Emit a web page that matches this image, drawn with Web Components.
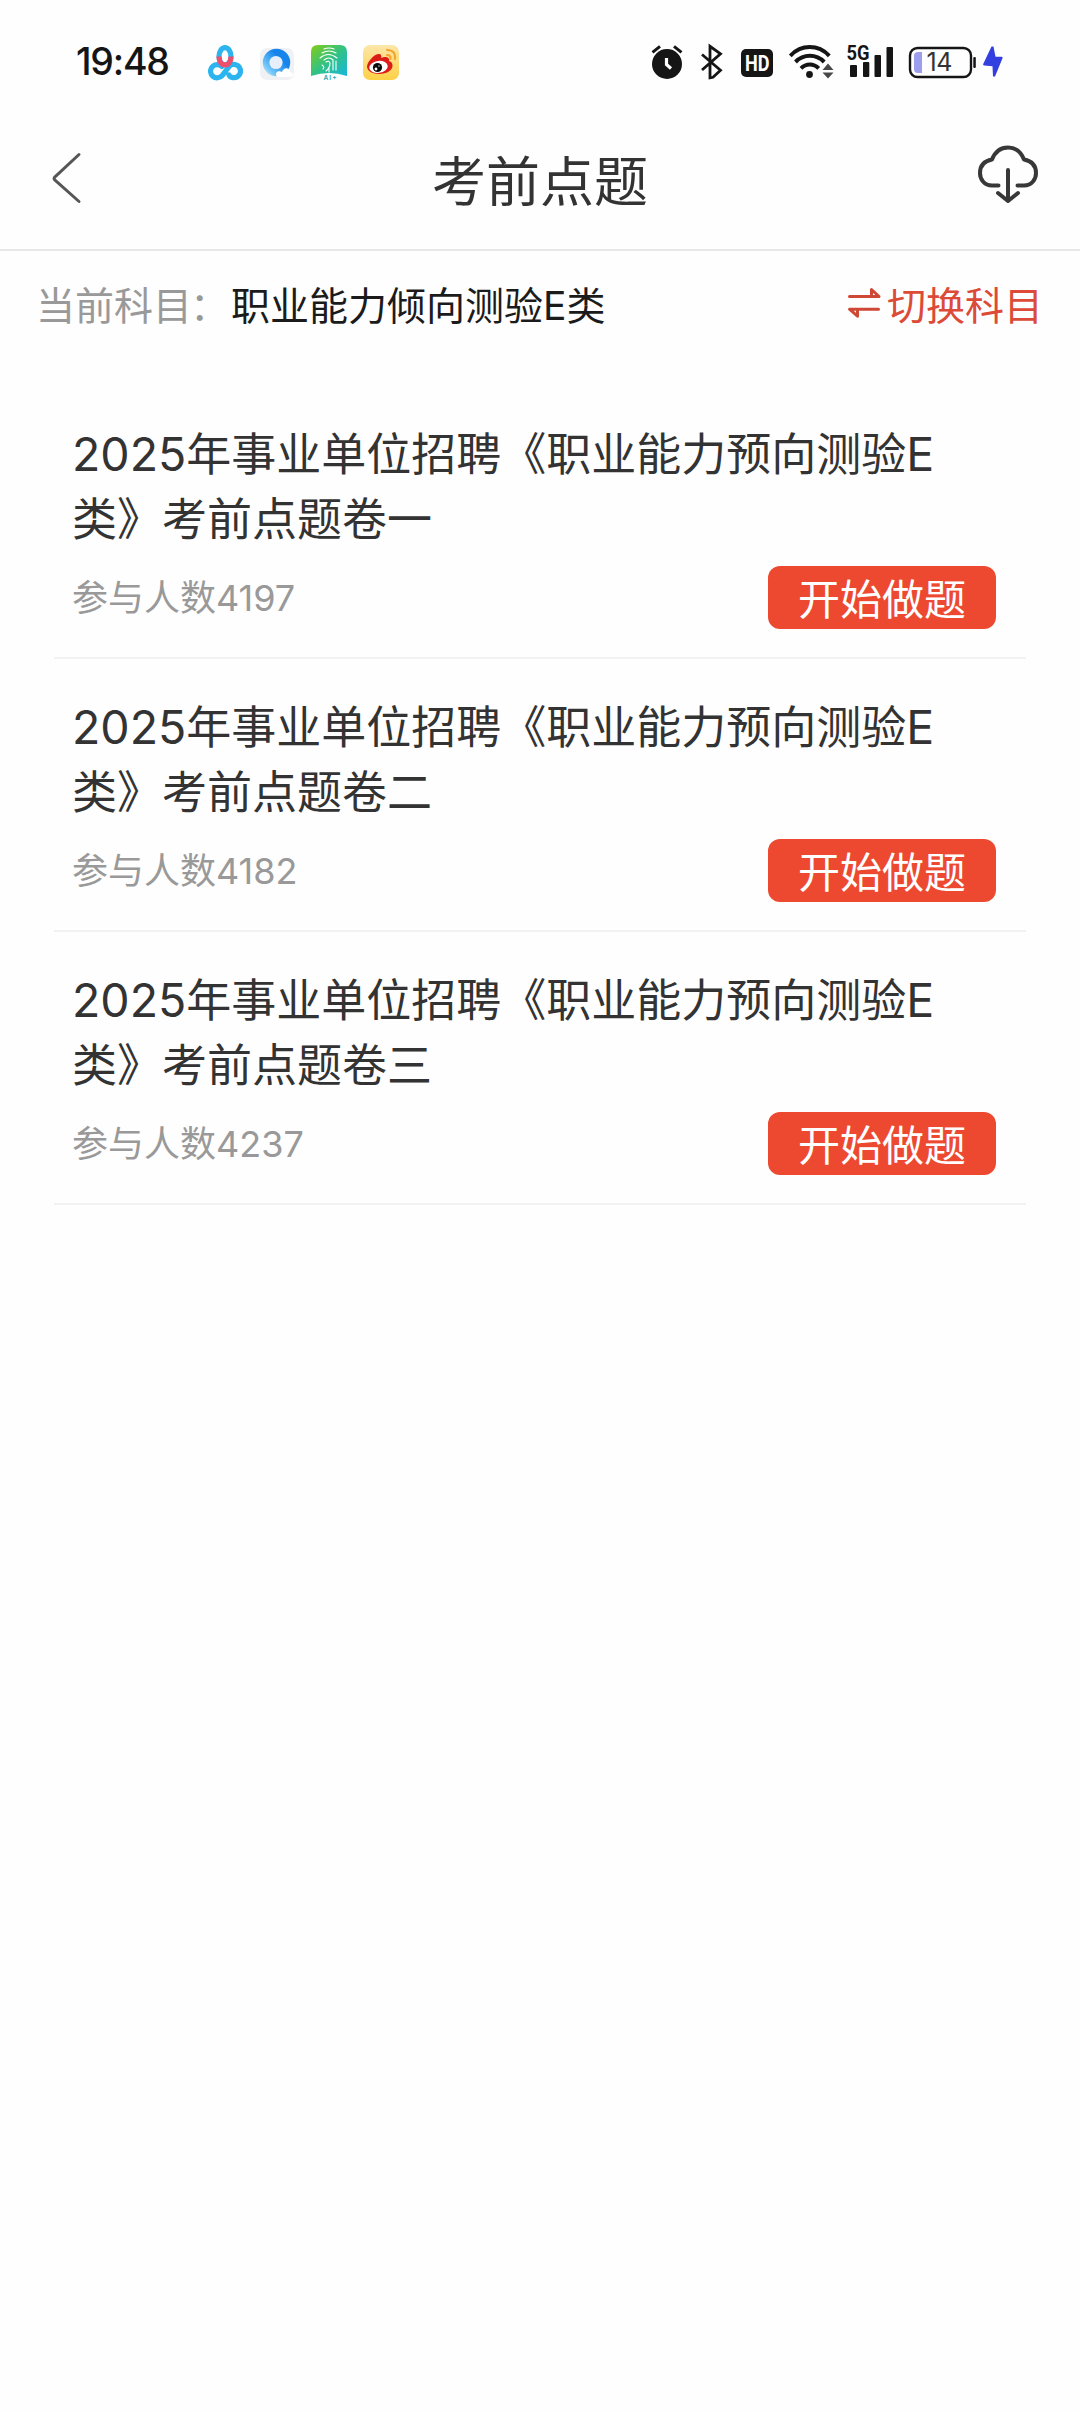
<!DOCTYPE html>
<html lang="zh-CN">
<head>
<meta charset="utf-8">
<title>考前点题</title>
<style>
html,body{margin:0;background:#fefefe}
body{font-family:Inter,"Noto Sans CJK SC",sans-serif;color:#333;min-height:2412px}
</style>
</head>
<body>
<exam-page></exam-page>
<script>
const define = (name, html) => customElements.define(name, class extends HTMLElement {
  constructor() {
    super();
    const t = document.createElement('template');
    t.innerHTML = html;
    this.attachShadow({mode: 'open'}).append(t.content.cloneNode(true));
  }
});

define('status-bar', `
<style>
:host{display:flex;align-items:center;height:124px;padding-left:76px;box-sizing:border-box;color:#151515}
svg{display:block;height:40px;flex:none}
time{font-size:37.5px;line-height:42px;font-weight:500;width:132px;letter-spacing:-1.2px;white-space:nowrap}
.apps{display:flex;gap:16px;width:443px}
.sys{display:flex}
</style>
<time>19:48</time>
<div class="apps">
<svg width="35" viewBox="208 42 35 40" fill="none" stroke-width="5.200" stroke-linecap="round">
  <path d="M222.300 75.300A6.600 6.600 0 1 1 221.800 66.500M222.300 75.300L228.800 66.800A6.600 6.600 0 1 1 233 77.600Q230 77.300 229 75" stroke="#2bb4ee"/>
  <ellipse cx="225" cy="56.300" rx="6" ry="8.600" stroke="#2bb4ee"/>
  <path d="M219 56.500c0 11.200 12 11.200 12 0" stroke="#ee4f6c" stroke-linecap="butt"/>
</svg>
<svg width="36" viewBox="259 42 36 40">
  <defs><linearGradient id="q" x1="1" y1="0" x2="0" y2="1"><stop offset=".35" stop-color="#1684ea"/><stop offset=".75" stop-color="#71c6f8"/><stop offset="1" stop-color="#e8f2fa"/></linearGradient></defs>
  <rect x="260" y="48" width="34" height="32" rx="7" fill="#f0f1f5"/>
  <circle cx="276.500" cy="62.500" r="13.700" fill="url(#q)"/>
  <circle cx="276" cy="62.500" r="6.600" fill="#e6effa"/>
  <path d="M277 77c-3-4 1-7 5-5 2-6 8-4 8 0 5 1 4 5 0 5z" fill="#fff"/>
</svg>
<svg width="36" viewBox="311 42 36 40">
  <defs><linearGradient id="a" x2="1" y2="1"><stop stop-color="#83cc16"/><stop offset=".5" stop-color="#32c284"/><stop offset="1" stop-color="#15b7dc"/></linearGradient></defs>
  <path d="M311 76V52q0-7 7-7h22q7 0 7 7v24q-18-6-36 0z" fill="url(#a)"/>
  <g fill="none" stroke="#fff" stroke-width="1.100" stroke-linecap="round"><path d="M324 49q5-2 10 0M322 53q7-4 14 0M320 58q8-7 17 0M324 60q5-4 9 0v10M326 62q3-2 4 1 0 5-4 8M322 65q3 2 1 4M329 67v5M336 61v9"/></g>
  <text x="323.500" y="79.600" font-size="6.500" font-weight="600" fill="#24a9b2" textLength="13">AI+</text>
</svg>
<svg width="36" viewBox="363 42 36 40">
  <defs><linearGradient id="w" y2="1" x2="0"><stop stop-color="#fce7ab"/><stop offset="1" stop-color="#fdd044"/></linearGradient></defs>
  <rect x="363" y="45" width="36" height="35" rx="7" fill="url(#w)"/>
  <path d="M367 67c0-5 7-13 12-13 2 0 3 2 2 4 4-2 9-1 8 3 4 1 4 5 3 7-3 8-24 8-25-1z" fill="#dc1c18"/>
  <ellipse cx="378.500" cy="67" rx="9.300" ry="6" fill="#fff" transform="rotate(-8 378 67)"/>
  <circle cx="377.500" cy="67.500" r="4.600" fill="#0c0c0c"/><circle cx="376" cy="69" r="1.400" fill="#fff"/><circle cx="379" cy="66" r=".7" fill="#fff"/>
  <path d="M387 50q9 0 8 9M387 55q4 0 3.500 4" fill="none" stroke="#f4a32b" stroke-width="2" stroke-linecap="round"/>
</svg>
</div>
<div class="sys">
<svg width="50" viewBox="651 42 50 40" fill="none" stroke="#151515">
  <circle cx="667" cy="64" r="15" fill="#151515" stroke="none"/>
  <path d="M652.500 52.300l7.500-6M681.500 52.300l-7.500-6" stroke-width="3"/>
  <path d="M666.500 58v6.500l4.500 4" stroke="#fff" stroke-width="3.200"/>
</svg>
<svg width="40" viewBox="701 42 40 40" fill="none" stroke="#151515" stroke-width="2.800">
  <path d="M702 54.500l18.500 15.800-7.500 7-3 .500V46.300l10.500 7.500L702 70"/>
</svg>
<svg width="47" viewBox="741 42 47 40">
  <rect x="741" y="49" width="32" height="28" rx="5" fill="#151515"/>
  <text x="745" y="71" font-family="Roboto" font-size="22.500" font-weight="700" fill="#fff" textLength="24.500" lengthAdjust="spacingAndGlyphs">HD</text>
</svg>
<svg width="59" viewBox="788 42 59 40">
  <g fill="none" stroke="#151515" stroke-width="4"><path d="M790.300 55.800c11-11.600 28-11.600 39 0M795.500 62c8-8.200 20.700-8.200 28.700 0M801 68.300c5-5.200 12.700-5.200 17.700 0"/></g>
  <circle cx="809.500" cy="74.500" r="3.400" fill="#151515"/>
  <path d="M822.500 70l5.500-6.500 5.500 6.500zM822.500 72.500h11l-5.500 6z" fill="#484848"/>
</svg>
<svg width="61" viewBox="847 42 61 40" fill="#151515">
  <text x="846.500" y="60" font-family="Roboto" font-size="20" font-weight="700" textLength="23" lengthAdjust="spacingAndGlyphs">5G</text>
  <rect x="850" y="65" width="7" height="12" rx="1"/><rect x="863" y="62" width="6.300" height="15" rx="1"/><rect x="874.500" y="55" width="6.500" height="22" rx="1"/><rect x="886.500" y="47" width="6.500" height="30" rx="1"/>
</svg>
<svg width="75" viewBox="908 42 75 40">
  <rect x="910" y="48" width="61" height="29" rx="7.500" fill="none" stroke="#151515" stroke-width="2.400"/>
  <path d="M922 52v21h-4q-4 0-4-4V56q0-4 4-4z" fill="#9c9dec"/>
  <rect x="973.300" y="57" width="2.500" height="11" rx="1" fill="#151515"/>
  <text x="926.500" y="71" font-size="25" fill="#333" textLength="26">14</text>
</svg>
<svg width="20" viewBox="983 42 20 40"><path d="M991.500 46.500L983.200 64q-.3 1.500 1 1.600l8.300.7.500 10.200h2L1002.600 58q.2-1.300-1-1.300h-6.100L993.500 46.500z" fill="#343fdf"/></svg>
</div>`);

define('nav-bar', `
<style>
:host{display:flex;justify-content:space-between;align-items:flex-start;height:127px;box-sizing:border-box;border-bottom:2px solid #e8e8e8;padding:16px 40px 0 50px}
svg{display:block}
h1{margin:0;font-weight:400;font-size:54px;line-height:86px;color:#333}
.end{width:64px}.start{width:54px}
</style>
<svg class="start" height="80" viewBox="50 140 54 80" fill="none" stroke="#565656" stroke-width="3" stroke-linecap="round" stroke-linejoin="round"><path d="M79 154.500L55 176.800q-1.800 1.700 0 3.400L79 201.500"/></svg>
<h1><slot></slot></h1>
<svg class="end" height="80" viewBox="976 140 64 80" fill="none" stroke="#383838" stroke-width="4" stroke-linecap="round" stroke-linejoin="round"><path d="M998.500 185.500h-6.500c-8 0-12-6.500-12-12.500 0-7 4-12 12-13.500 3-7.500 9-12 16-12s13 4.500 16 12c8 1.500 12 6.500 12 13.500 0 6-4 12.500-12 12.500h-6.500M1008 170v31M998 193l10 8 10-8"/></svg>`);

define('subject-bar', `
<style>
:host{display:flex;align-items:center;height:109px;padding:0 37px 0 36px;font-size:39px;line-height:56px}
.label{color:#999;width:195px;white-space:nowrap}
.colon{margin-left:-2px}
.name{color:#1b1b1b;flex:1}
.switch{display:flex;align-items:center;gap:6px;color:#dc4a38}
svg{display:block}
</style>
<span class="label">当前科目<span class="colon">：</span></span><span class="name"><slot></slot></span>
<span class="switch"><svg width="33" height="56" viewBox="849 278 33 56" fill="none" stroke="#cf4735" stroke-width="3" stroke-linecap="round" stroke-linejoin="round"><path d="M850.500 296.500h29.500l-7.500-7v5M879.500 309.200h-29l8 7v-5"/></svg>切换科目</span>`);

define('quiz-item', `
<style>
:host{display:block;height:273px;box-sizing:border-box;border-bottom:2px solid #f2f2f2;padding:36px 30px 0 18px}
h2{margin:0;font-weight:400;font-size:45px;line-height:65px;width:875px;color:#333}
::slotted(.latin){font-size:46.5px;line-height:1}
.row{display:flex;justify-content:space-between;align-items:center;margin-top:14px;height:63px}
.count{font-size:36px;line-height:52px;color:#999;padding-top:1px}
button{font:400 42px/60px Inter,"Noto Sans CJK SC",sans-serif;width:228px;height:63px;border:0;border-radius:12px;background:#ed4931;color:#fff;padding:4px 0 0}
</style>
<h2><slot></slot></h2>
<div class="row"><span class="count">参与人数<slot name="count"></slot></span><button>开始做题</button></div>`);

define('exam-page', `
<style>
:host{display:block;width:1080px}
main{display:block;padding:26px 54px 0}
</style>
<status-bar></status-bar>
<nav-bar>考前点题</nav-bar>
<subject-bar>职业能力倾向测验E类</subject-bar>
<main>
<quiz-item><span class="latin">2025</span>年事业单位招聘《职业能力预向测验<span class="latin">E</span>类》考前点题卷一<span slot="count">4197</span></quiz-item>
<quiz-item><span class="latin">2025</span>年事业单位招聘《职业能力预向测验<span class="latin">E</span>类》考前点题卷二<span slot="count">4182</span></quiz-item>
<quiz-item><span class="latin">2025</span>年事业单位招聘《职业能力预向测验<span class="latin">E</span>类》考前点题卷三<span slot="count">4237</span></quiz-item>
</main>`);
</script>
</body>
</html>
